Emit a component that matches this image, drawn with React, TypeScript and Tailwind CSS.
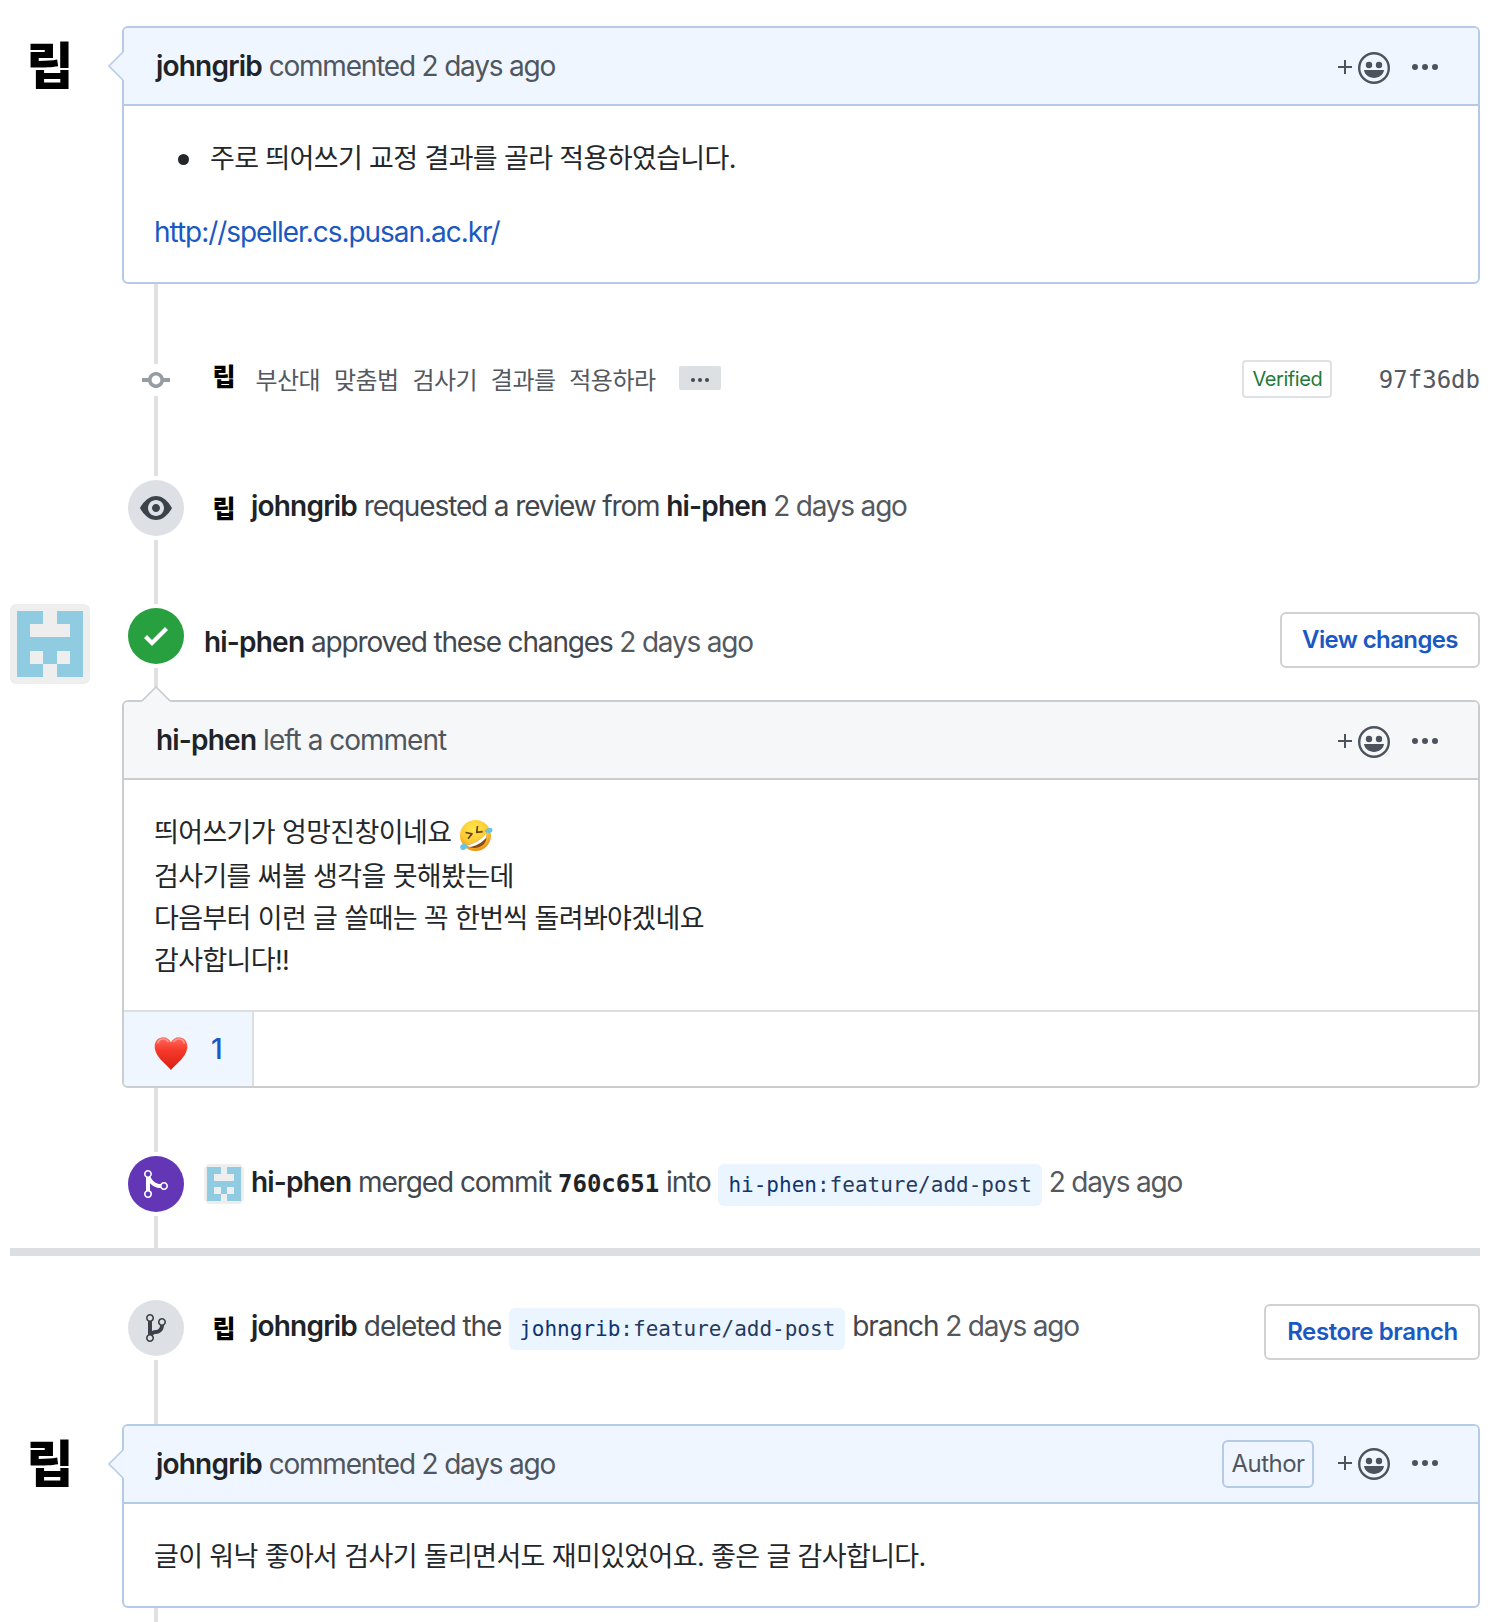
import type { ReactNode } from "react";
import clsx from "clsx";

const icons = {
  commit: {
    w: 14,
    d: "M10.86 7c-.45-1.72-2-3-3.86-3-1.86 0-3.41 1.28-3.86 3H0v2h3.14c.45 1.72 2 3 3.86 3 1.86 0 3.41-1.28 3.86-3H14V7h-3.14zM7 10.2c-1.22 0-2.2-.98-2.2-2.2 0-1.22.98-2.2 2.2-2.2 1.22 0 2.2.98 2.2 2.2 0 1.22-.98 2.2-2.2 2.2z",
  },
  eye: {
    w: 16,
    d: "M8.06 2C3 2 0 8 0 8s3 6 8.06 6C13 14 16 8 16 8s-3-6-7.94-6zM8 12c-2.2 0-4-1.78-4-4 0-2.2 1.8-4 4-4 2.22 0 4 1.8 4 4 0 2.22-1.78 4-4 4zm2-4c0 1.11-.89 2-2 2-1.11 0-2-.89-2-2 0-1.11.89-2 2-2 1.11 0 2 .89 2 2z",
  },
  check: {
    w: 12,
    d: "M12 5l-8 8-4-4 1.5-1.5L4 10l6.5-6.5L12 5z",
  },
  merge: {
    w: 12,
    d: "M10 7c-.73 0-1.38.41-1.73 1.02V8C7.22 7.98 6 7.64 5.14 6.98c-.75-.58-1.5-1.61-1.89-2.44A1.993 1.993 0 0 0 2 .99C.89.99 0 1.89 0 3a2 2 0 0 0 1 1.72v6.56c-.59.35-1 .99-1 1.72 0 1.11.89 2 2 2a1.993 1.993 0 0 0 1-3.72V7.67c.67.7 1.44 1.27 2.3 1.69.86.42 2.03.63 2.97.64v-.02c.36.61 1 1.02 1.73 1.02 1.11 0 2-.89 2-2 0-1.11-.89-2-2-2zm-6.8 6c0 .66-.55 1.2-1.2 1.2-.65 0-1.2-.55-1.2-1.2 0-.65.55-1.2 1.2-1.2.65 0 1.2.55 1.2 1.2zm0-10c0 .66-.55 1.2-1.2 1.2-.65 0-1.2-.55-1.2-1.2 0-.65.55-1.2 1.2-1.2.65 0 1.2.55 1.2 1.2zM10 10.2c-.66 0-1.2-.55-1.2-1.2 0-.65.54-1.2 1.2-1.2.65 0 1.2.55 1.2 1.2 0 .65-.55 1.2-1.2 1.2z",
  },
  branch: {
    w: 10,
    d: "M10 5c0-1.11-.89-2-2-2a1.993 1.993 0 0 0-1 3.72v.3c-.02.52-.23.98-.63 1.38-.4.4-.86.61-1.38.63-.83.02-1.48.16-2 .45V4.72a1.993 1.993 0 0 0-1-3.72C.88 1 0 1.89 0 3a2 2 0 0 0 1 1.72v6.56c-.59.35-1 .99-1 1.72 0 1.11.89 2 2 2 1.11 0 2-.89 2-2 0-.53-.2-1-.53-1.36.09-.06.48-.41.59-.47.25-.11.56-.17.94-.17 1.05-.05 1.95-.45 2.75-1.25S8.95 7.77 9 6.73h-.02C9.59 6.37 10 5.73 10 5zM2 1.8c.66 0 1.2.55 1.2 1.2 0 .65-.55 1.2-1.2 1.2C1.35 4.2.8 3.65.8 3c0-.65.55-1.2 1.2-1.2zm0 12.41c-.66 0-1.2-.55-1.2-1.2 0-.65.55-1.2 1.2-1.2.65 0 1.2.55 1.2 1.2 0 .65-.55 1.2-1.2 1.2zm6-8c-.66 0-1.2-.55-1.2-1.2 0-.65.55-1.2 1.2-1.2.65 0 1.2.55 1.2 1.2 0 .65-.55 1.2-1.2 1.2z",
  },
};

const Octicon = ({ name }: { name: keyof typeof icons }) => (
  <svg width={icons[name].w * 2} height={32} viewBox={`0 0 ${icons[name].w} 16`} fill="currentColor">
    <path fillRule="evenodd" d={icons[name].d} />
  </svg>
);

const RipAvatar = ({ small }: { small?: boolean }) => (
  <div
    className={clsx(
      "flex shrink-0 items-center justify-center font-['Noto_Sans_CJK_KR',sans-serif] font-black text-black",
      small ? "h-10 w-10 text-[25px] leading-[40px]" : "h-20 w-20 text-[50px] leading-[80px]",
    )}
  >
    <span className={clsx("inline-block", small ? "-translate-y-[1.5px]" : "-translate-y-[4px] scale-x-[1.03]")}>립</span>
  </div>
);

const Identicon = ({ size }: { size: number }) => (
  <svg width={size} height={size} viewBox="0 0 12 12" className="shrink-0 rounded-[6px]" shapeRendering="crispEdges">
    <path fill="#eeeeee" d="M0 0h12v12H0z" />
    <path fill="#90cce1" fillRule="evenodd" d="M1 1h4v2H3v2h6V3H7V1h4v10H7V9h2V7H7v2H5V7H3v2h2v2H1z" />
  </svg>
);

const Line = ({ className }: { className: string }) => <div className={clsx("w-1 bg-[#dfe1e3]", className)} />;

const Badge = ({ className, children }: { className: string; children: ReactNode }) => (
  <div className={clsx("my-1 flex h-14 w-14 items-center justify-center rounded-full", className)}>{children}</div>
);

const Row = ({ avatar, rail, className, children }: { avatar?: ReactNode; rail: ReactNode; className?: string; children: ReactNode }) => (
  <div className="flex">
    <div className="w-[112px] shrink-0">{avatar}</div>
    <div className="flex w-[68px] shrink-0 flex-col items-center">{rail}</div>
    <div className={clsx("flex min-w-0 flex-1 items-start", className)}>{children}</div>
  </div>
);

const Actions = () => (
  <div className="flex items-start text-[#4c535d]">
    <svg width="52" height="32" viewBox="0 0 52 32" fill="none">
      <path d="M0 15h14M7 8v14" stroke="currentColor" strokeWidth="2" />
      <circle cx="36" cy="16" r="14.8" stroke="currentColor" strokeWidth="2.4" />
      <circle cx="31" cy="13" r="3.200" fill="currentColor" />
      <circle cx="41" cy="13" r="3.200" fill="currentColor" />
      <path d="M26.500 18h19c.3 0 .5.3.5.6-.9 4.400-5 7.400-10 7.400s-9.100-3-10-7.400c0-.3.2-.6.5-.6z" fill="currentColor" />
    </svg>
    <svg width="28" height="32" viewBox="0 0 28 32" fill="currentColor" className="ml-[21px]">
      <circle cx="4" cy="15" r="3" />
      <circle cx="14" cy="15" r="3" />
      <circle cx="24" cy="15" r="3" />
    </svg>
  </div>
);

const Caret = ({ up }: { up?: boolean }) =>
  up ? (
    <svg width="28" height="18" viewBox="0 0 28 18" className="absolute -top-[16px] left-[18px]">
      <path d="M0 18V15L14 1l14 14v3z" fill="#f5f7f9" />
      <path d="M0 15L14 1l14 14" fill="none" stroke="#caccce" strokeWidth="1.6" />
    </svg>
  ) : (
    <svg width="18" height="28" viewBox="0 0 18 28" className="absolute -left-[16px] top-6">
      <path d="M18 0h-3L1 14l14 14h3z" fill="#eff6ff" />
      <path d="M15 0L1 14l14 14" fill="none" stroke="#b8cde7" strokeWidth="1.6" />
    </svg>
  );

interface CardProps {
  user: string;
  action: string;
  own?: boolean;
  author?: boolean;
  className: string;
  children: ReactNode;
}

const Card = ({ user, action, own, author, className, children }: CardProps) => (
  <div className={clsx("relative w-[1358px] rounded-[6px] border-2 bg-white", own ? "border-[#b4cae6]" : "border-[#caccce]", className)}>
    <div
      className={clsx(
        "flex h-[78px] items-start rounded-t-[4px] border-b-2 pl-8 pr-[39px]",
        own ? "border-[#b4cae6] bg-[#eff6ff]" : "border-[#caccce] bg-[#f5f7f9]",
      )}
    >
      <p className={clsx("flex-1 pt-[17px] leading-[42px] text-[#50565e]", own ? "tracking-[-1.2px]" : "tracking-[-1px]")}>
        <User>{user}</User> {action}
      </p>
      {author && (
        <span className="mr-6 mt-[14px] flex h-12 w-[92px] items-center justify-center rounded-[6px] border-2 border-[#b4cae6] text-2xl tracking-[-0.5px] text-[#50565e]">
          Author
        </span>
      )}
      <div className={author ? "pt-[22px]" : "pt-6"}>
        <Actions />
      </div>
    </div>
    {children}
    <Caret up={!own} />
  </div>
);

const User = ({ children }: { children: string }) => (
  <strong className="font-semibold tracking-[-0.8px] text-[#202327]">{children}</strong>
);

const Time = () => <span className="tracking-[-1.2px] text-[#54595f]">2 days ago</span>;

const BranchRef = ({ owner, children }: { owner: string; children: string }) => (
  <span className="ml-px inline-block h-[42px] rounded-[6px] bg-[#ebf5ff] px-[10px] font-['DejaVu_Sans_Mono',monospace] text-[21px] leading-[42px] tracking-normal text-[#243a5e]">
    <span className="text-[#0b3474]">{owner}</span>:{children}
  </span>
);

const Button = ({ className, children }: { className: string; children: string }) => (
  <button
    className={clsx(
      "ml-auto flex h-14 items-center justify-center whitespace-nowrap rounded-[6px] border-2 border-[#cfd1d3] text-2xl font-semibold text-[#1a58c2]",
      className,
    )}
  >
    {children}
  </button>
);

const Rofl = () => (
  <svg width="34" height="34" viewBox="0 0 34 34" className="ml-2 mt-[7px] inline-block align-top">
    <defs>
      <radialGradient id="face" cx="0.45" cy="0.3" r="0.75">
        <stop offset="0" stopColor="#ffe84f" />
        <stop offset="0.6" stopColor="#fdc72f" />
        <stop offset="1" stopColor="#e8860f" />
      </radialGradient>
    </defs>
    <circle cx="16.500" cy="16.500" r="15.500" fill="url(#face)" />
    <path d="M6.500 13.500l6.500 1.300-4 5M18.500 7l-.8 6.300 6-.6" fill="none" stroke="#6b4015" strokeWidth="1.700" strokeLinejoin="round" />
    <path d="M7.500 26c7-.5 14.500-5 19.500-11.500 2 6-1.500 11.500-6.500 13.500-5 1.800-10 1-13-2z" fill="#8a4a14" />
    <path d="M7.500 26c7-.5 14.500-5 19.500-11.500.5 1.500.5 3 .3 4.300-4.800 5.200-9.800 8-16.300 9.200-1.300-.4-2.500-1-3.500-2z" fill="#fff" />
    <path d="M25.500 12.500c1-2.500 3.500-4 6.500-3.500 2 .5 2 3.500 0 4.500-2.500 1-4.500.3-6.500-1zM8.500 26.500c-1.500-1.500-4.500-2-6.500-.5-1.500 1.500-.8 4.500 1.500 5 2.500.3 4.500-1.700 5-4.500z" fill="#66c4ea" />
  </svg>
);

const Heart = () => (
  <svg width="34" height="34" viewBox="0 0 34 34">
    <defs>
      <linearGradient id="heart" x1="0" y1="0" x2="0" y2="1">
        <stop offset="0" stopColor="#ff6a5e" />
        <stop offset="0.4" stopColor="#f6392b" />
        <stop offset="1" stopColor="#d81e13" />
      </linearGradient>
    </defs>
    <path d="M17 34C13.500 29 .7 21 .7 10.400.7 5 4.300 1.200 9 1.200c3.500 0 6.600 2 8 5.300 1.400-3.300 4.500-5.300 8-5.300 4.700 0 8.300 3.800 8.300 9.200C33.300 21 20.500 29 17 34z" fill="url(#heart)" />
    <path d="M3.500 7.500C4.500 4.300 6.500 3 9 3s4.500 1.200 5.500 3.200M19.500 6.200C20.500 4.200 22.500 3 25 3s4.500 1.300 5.500 4.500" fill="none" stroke="#ffb3aa" strokeWidth="1.500" opacity="0.7" />
  </svg>
);

export default function App() {
  return (
    <div className="h-[1622px] w-[1500px] overflow-hidden bg-white pl-[10px] pr-5 pt-[26px] font-['Inter','Noto_Sans_CJK_KR',sans-serif] text-[28px] text-[#43484e]">
      <div className="flex h-[258px]">
        <div className="w-[112px] shrink-0">
          <RipAvatar />
        </div>
        <Card user="johngrib" action="commented 2 days ago" own className="h-[258px]">
          <div className="px-[30px] pt-8 text-[#24272a]">
            <div className="flex h-[42px] items-center">
              <span className="ml-6 h-[11px] w-[11px] rounded-full bg-[#24272a]" />
              <span className="ml-[21px] text-[27px] tracking-[-0.64px]">주로 띄어쓰기 교정 결과를 골라 적용하였습니다.</span>
            </div>
            <a className="mt-[31px] block leading-[42px] tracking-[-1.05px] text-[#1a58c2]">http://speller.cs.pusan.ac.kr/</a>
          </div>
        </Card>
      </div>

      <Row
        rail={
          <>
            <Line className="h-20" />
            <div className="text-[#959da3]">
              <Octicon name="commit" />
            </div>
            <Line className="h-10" />
          </>
        }
        className="pt-[72px]"
      >
        <div className="ml-[14px]">
          <RipAvatar small />
        </div>
        <span className="ml-[11.5px] mt-[3px] font-['Noto_Sans_CJK_KR',sans-serif] text-2xl leading-[40px] tracking-[-0.54px] text-[#54595f] [word-spacing:9px]">
          부산대 맞춤법 검사기 결과를 적용하라
        </span>
        <span className="ml-6 mt-[10px] flex h-6 w-[42px] items-center justify-center gap-[3px] rounded-[2px] bg-[#dde0e3] pt-[3px]">
          <i className="h-1 w-1 rounded-full bg-[#43484e]" />
          <i className="h-1 w-1 rounded-full bg-[#43484e]" />
          <i className="h-1 w-1 rounded-full bg-[#43484e]" />
        </span>
        <span className="ml-auto mt-1 flex h-[38px] w-[90px] items-center justify-center rounded-[4px] border-2 border-[#dfe1e4] pl-px text-xl tracking-[-0.45px] text-[#237a38]">
          Verified
        </span>
        <span className="ml-[47px] mt-1 font-['DejaVu_Sans_Mono',monospace] text-2xl leading-[40px] text-[#54595f]">97f36db</span>
      </Row>

      <Row
        rail={
          <>
            <Line className="h-10" />
            <Badge className="bg-[#dde0e4] text-[#3b4249]">
              <Octicon name="eye" />
            </Badge>
            <Line className="h-8" />
          </>
        }
        className="pt-[49px]"
      >
        <div className="ml-[14px] mt-[3px]">
          <RipAvatar small />
        </div>
        <p className="ml-[7px] whitespace-nowrap leading-[42px] tracking-[-1.13px]">
          <User>johngrib</User> requested a review from <User>hi-phen</User> <Time />
        </p>
      </Row>

      <Row
        avatar={
          <div className="pt-8">
            <Identicon size={80} />
          </div>
        }
        rail={
          <>
            <Line className="h-8" />
            <Badge className="bg-[#28a040] text-white">
              <Octicon name="check" />
            </Badge>
            <Line className="h-8" />
          </>
        }
        className="pt-10"
      >
        <p className="ml-[14px] mt-[9px] whitespace-nowrap leading-[42px] tracking-[-1.15px]">
          <User>hi-phen</User> approved these changes <Time />
        </p>
        <Button className="w-[200px] tracking-[-0.62px]">View changes</Button>
      </Row>

      <div className="flex pl-[112px]">
        <Card user="hi-phen" action="left a comment" className="h-[388px]">
          <div className="h-[230px] px-[30px] pt-8 text-[27px] leading-[42px] tracking-[-0.64px] text-[#24272a]">
            <p className="h-[44px]">
              띄어쓰기가 엉망진창이네요
              <Rofl />
            </p>
            <p>검사기를 써볼 생각을 못해봤는데</p>
            <p>다음부터 이런 글 쓸때는 꼭 한번씩 돌려봐야겠네요</p>
            <p>감사합니다!!</p>
          </div>
          <div className="flex h-[76px] border-t-2 border-[#dcdfe2]">
            <button className="flex w-[130px] rounded-bl-[4px] border-r-2 border-[#dcdfe2] bg-[#eff6ff] pl-[30px] pt-6 text-[#1a58c2]">
              <Heart />
              <span className="-mt-[8px] ml-[23px] font-medium leading-[42px]">1</span>
            </button>
          </div>
        </Card>
      </div>

      <Row
        rail={
          <>
            <Line className="h-16" />
            <Badge className="bg-[#6236b5] text-white">
              <Octicon name="merge" />
            </Badge>
            <Line className="h-8" />
          </>
        }
        className="pt-[73px]"
      >
        <div className="ml-[14px] mt-[3px]">
          <Identicon size={40} />
        </div>
        <p className="ml-[7px] whitespace-nowrap leading-[42px] tracking-[-1.08px]">
          <User>hi-phen</User> merged commit{" "}
          <strong className="font-['DejaVu_Sans_Mono',monospace] text-2xl leading-none tracking-normal text-[#202327]">760c651</strong> into{" "}
          <BranchRef owner="hi-phen">feature/add-post</BranchRef> <Time />
        </p>
      </Row>

      <div className="h-2 bg-[#dbdfe2]" />

      <Row
        rail={
          <>
            <div className="h-10" />
            <Badge className="bg-[#dde0e4] text-[#3b4249]">
              <Octicon name="branch" />
            </Badge>
            <Line className="h-16" />
          </>
        }
        className="pt-[48px]"
      >
        <div className="ml-[14px] mt-1">
          <RipAvatar small />
        </div>
        <p className="ml-[7px] mt-px whitespace-nowrap leading-[42px] tracking-[-1.03px]">
          <User>johngrib</User> deleted the <BranchRef owner="johngrib">feature/add-post</BranchRef> branch <Time />
        </p>
        <Button className="w-[216px] pl-px tracking-[-0.4px]">Restore branch</Button>
      </Row>

      <div className="flex h-[184px]">
        <div className="w-[112px] shrink-0">
          <RipAvatar />
        </div>
        <Card user="johngrib" action="commented 2 days ago" own author className="h-[184px]">
          <p className="px-[30px] pt-8 text-[27px] leading-[42px] tracking-[-0.64px] text-[#24272a]">
            글이 워낙 좋아서 검사기 돌리면서도 재미있었어요. 좋은 글 감사합니다.
          </p>
        </Card>
      </div>
      <div className="pl-36">
        <Line className="h-4" />
      </div>
    </div>
  );
}
